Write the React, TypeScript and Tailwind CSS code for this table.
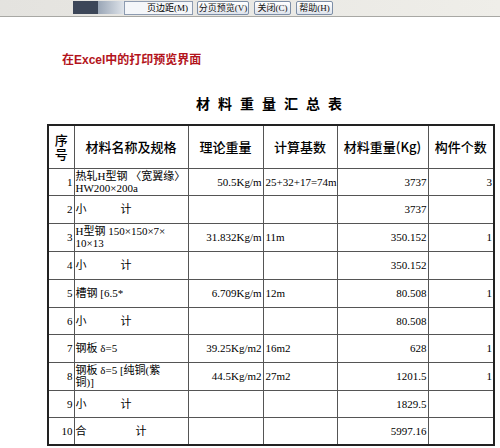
import React from "react";

type Row = {
  no: string;
  name: React.ReactNode;
  unit?: string;
  base?: string;
  weight?: string;
  count?: string;
  h: number;
};

const Subtotal = ({ label, gap }: { label: string; gap: number }) => (
  <span>
    {label}
    <span style={{ marginLeft: gap }}>计</span>
  </span>
);

const rows: Row[] = [
  {
    no: "1",
    name: (
      <>
        热轧H型钢 〈宽翼缘〉
        <br />
        HW200×200a
      </>
    ),
    unit: "50.5Kg/m",
    base: "25+32+17=74m",
    weight: "3737",
    count: "3",
    h: 27,
  },
  { no: "2", name: <Subtotal label="小" gap={34} />, weight: "3737", h: 28 },
  {
    no: "3",
    name: (
      <>
        H型钢 150×150×7×
        <br />
        10×13
      </>
    ),
    unit: "31.832Kg/m",
    base: "11m",
    weight: "350.152",
    count: "1",
    h: 28,
  },
  { no: "4", name: <Subtotal label="小" gap={34} />, weight: "350.152", h: 28 },
  { no: "5", name: "槽钢 [6.5*", unit: "6.709Kg/m", base: "12m", weight: "80.508", count: "1", h: 28 },
  { no: "6", name: <Subtotal label="小" gap={34} />, weight: "80.508", h: 27 },
  { no: "7", name: "钢板 δ=5", unit: "39.25Kg/m2", base: "16m2", weight: "628", count: "1", h: 28 },
  {
    no: "8",
    name: (
      <>
        钢板 δ=5 [纯铜(紫
        <br />
        铜)]
      </>
    ),
    unit: "44.5Kg/m2",
    base: "27m2",
    weight: "1201.5",
    count: "1",
    h: 28,
  },
  { no: "9", name: <Subtotal label="小" gap={34} />, weight: "1829.5", h: 27 },
  { no: "10", name: <Subtotal label="合" gap={49} />, weight: "5997.16", h: 28 },
];

const ToolButton = ({ label, w }: { label: string; w: number }) => (
  <div
    className="h-[14px] flex items-center justify-center border border-[#7d8ea6] rounded-[2px] bg-gradient-to-b from-[#ffffff] to-[#dfe4ec] text-[9px] leading-none text-[#111] whitespace-nowrap overflow-hidden"
    style={{ width: w }}
  >
    {label}
  </div>
);

export default function App() {
  const cell = "border border-[#555] p-0";
  return (
    <div className="w-[500px] h-[448px] bg-white overflow-hidden font-['Liberation_Serif','Noto_Sans_CJK_SC',serif] text-black">
      {/* toolbar */}
      <div className="h-[17px] flex items-start pt-[1px] bg-gradient-to-r from-[#e4e3df] to-[#efeee9] border-b border-[#a8a8a4]">
        <div className="w-[73px]" />
        <div className="w-[25px] h-[13px] bg-[#3c4658]" />
        <div className="w-[26px] h-[13px] bg-gradient-to-r from-[#9aa6b6] to-[#dfe4ea]" />
        <div className="w-[69px] h-[14px] flex items-center justify-end pr-[4px] border border-[#8d9bb0] bg-[#f4f6f9] text-[9px] leading-none whitespace-nowrap">
          页边距(M)
        </div>
        <div className="w-[4px]" />
        <ToolButton label="分页预览(V)" w={52} />
        <div className="w-[5px]" />
        <ToolButton label="关闭(C)" w={37} />
        <div className="w-[5px]" />
        <ToolButton label="帮助(H)" w={37} />
      </div>

      {/* caption */}
      <div className="mt-[36px] ml-[62px] h-[14px] text-[12px] leading-[14px] font-bold text-[#b3141c] font-['Liberation_Sans','Noto_Sans_CJK_SC',sans-serif]">
        在Excel中的打印预览界面
      </div>

      {/* title */}
      <div className="mt-[28px] ml-[196px] h-[16px] text-[14px] leading-[16px] font-bold tracking-[8px] font-['Noto_Sans_CJK_SC',sans-serif]">
        材料重量汇总表
      </div>

      {/* table */}
      <table className="mt-[13px] ml-[47px] border-collapse border-2 border-[#222] table-fixed w-[446px]">
        <colgroup>
          <col className="w-[26px]" />
          <col className="w-[114px]" />
          <col className="w-[75px]" />
          <col className="w-[74px]" />
          <col className="w-[91px]" />
          <col className="w-[66px]" />
        </colgroup>
        <thead>
          <tr className="h-[43px] text-[13px] font-medium font-['Noto_Sans_CJK_SC',sans-serif]">
            <th className={`${cell} leading-[14px] font-medium`}>
              序<br />号
            </th>
            <th className={`${cell} font-medium`}>材料名称及规格</th>
            <th className={`${cell} font-medium`}>理论重量</th>
            <th className={`${cell} font-medium`}>计算基数</th>
            <th className={`${cell} font-medium whitespace-nowrap`}>材料重量(Kg)</th>
            <th className={`${cell} font-medium whitespace-nowrap`}>构件个数</th>
          </tr>
        </thead>
        <tbody className="text-[11px] leading-[12px]">
          {rows.map((r) => (
            <tr key={r.no} style={{ height: r.h }}>
              <td className={`${cell} text-right pr-[1px]`}>{r.no}</td>
              <td className={`${cell} text-left pl-[1px] leading-[12px] text-[11px] whitespace-nowrap overflow-hidden`}>
                {r.name}
              </td>
              <td className={`${cell} text-right pr-[1px] whitespace-nowrap`}>{r.unit}</td>
              <td className={`${cell} text-left pl-[2px] whitespace-nowrap`}>{r.base}</td>
              <td className={`${cell} text-right pr-[1px]`}>{r.weight}</td>
              <td className={`${cell} text-right pr-[1px]`}>{r.count}</td>
            </tr>
          ))}
        </tbody>
      </table>
    </div>
  );
}
